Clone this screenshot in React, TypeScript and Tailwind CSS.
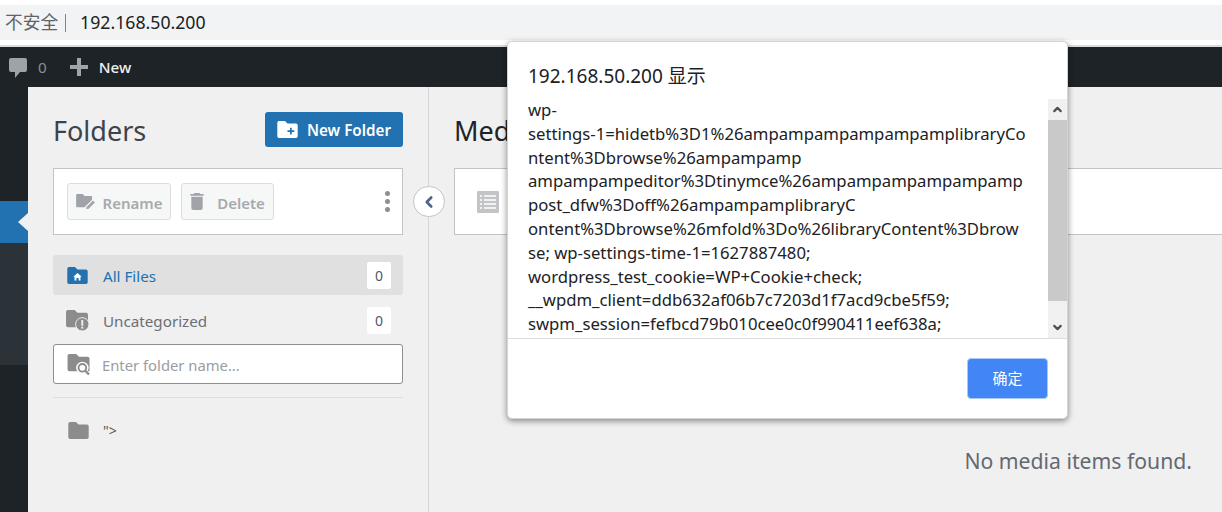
import React from "react";
import { ChevronLeft, ChevronUp, ChevronDown } from "lucide-react";

const sans = "font-['Noto_Sans','Noto_Sans_CJK_SC',sans-serif]";

const FolderIcon: React.FC<{ className?: string; children?: React.ReactNode }> = ({ className, children }) => (
  <svg viewBox="0 0 24 20" className={className} fill="currentColor">
    <path d="M2 0h7l3 3h10a2 2 0 0 1 2 2v13a2 2 0 0 1-2 2H2a2 2 0 0 1-2-2V2a2 2 0 0 1 2-2z" />
    {children}
  </svg>
);

const AdminBar: React.FC = () => (
  <div className="h-10 bg-[#1d2327] flex items-center pl-[9px] text-[15.2px]">
    <svg viewBox="0 0 18 20" className="w-[18px] h-5 mt-[1px] text-[#9ea3a8]" fill="currentColor">
      <path d="M2 0h14a2 2 0 0 1 2 2v10a2 2 0 0 1-2 2h-5l-5 6v-6H2a2 2 0 0 1-2-2V2a2 2 0 0 1 2-2z" />
    </svg>
    <span className="ml-[11px] text-[#8c8f94]">0</span>
    <svg viewBox="0 0 18 18" className="ml-[23px] w-[18px] h-[18px] text-[#a0a5aa]" fill="currentColor">
      <path d="M7 0h4v7h7v4h-7v7H7v-7H0V7h7z" />
    </svg>
    <span className="ml-[11px] text-[#f0f0f1] font-medium">New</span>
  </div>
);

const Sidebar: React.FC = () => (
  <div className="w-7 shrink-0 bg-[#1d2327] flex flex-col pt-[114px]">
    <div className="h-[42px] bg-[#2271b1] flex items-center justify-end">
      <div className="w-0 h-0 border-y-[9px] border-y-transparent border-r-[10px] border-r-[#f0f0f1]" />
    </div>
    <div className="h-[122px] bg-[#2c3338]" />
  </div>
);

const ToolButton: React.FC<{ label: string; icon: React.ReactNode; className: string }> = ({ label, icon, className }) => (
  <div className={`h-[37px] flex items-center justify-center gap-2 rounded-[3px] border border-[#dcdcde] bg-[#f6f7f7] text-[15px] font-semibold text-[#a7aaad] ${className}`}>
    {icon}
    <span className="mt-[3px]">{label}</span>
  </div>
);

const FolderRow: React.FC<{ label: string; active?: boolean; icon: React.ReactNode }> = ({ label, active, icon }) => (
  <div className={`h-10 flex items-center rounded-[3px] pl-[14px] pr-3 ${active ? "bg-[#e0e0e0] text-[#2271b1]" : "text-[#6b6f74]"}`}>
    <div className="w-[22px] flex">{icon}</div>
    <span className="ml-[14px] mt-[2px] text-[15.2px]">{label}</span>
    <span className="ml-auto w-6 h-[27px] bg-white rounded-[2px] flex items-center justify-center text-[14px] text-[#50575e]">0</span>
  </div>
);

const FolderPanel: React.FC = () => (
  <div className="w-[401px] shrink-0 border-r border-[#d5d5dc] pl-[25px] pr-[25px] pt-[25px]">
    <div className="flex items-center justify-between h-[35px]">
      <h2 className="text-[27px] mt-[3px] text-[#3c434a]">Folders</h2>
      <div className="w-[138px] h-[35px] rounded-[3px] bg-[#2271b1] text-white text-[15.2px] font-semibold flex items-center justify-center gap-[9px]">
        <FolderIcon className="w-[21px] h-[17px] text-white">
          <path d="M15 8h2v3h3v2h-3v3h-2v-3h-3v-2h3z" fill="#2271b1" />
        </FolderIcon>
        <span className="mt-[2px]">New Folder</span>
      </div>
    </div>
    <div className="mt-[21px] h-[67px] bg-white border border-[#c3c4c7] flex items-center pl-[13px] pr-[12px]">
      <ToolButton
        label="Rename"
        className="w-[104px]"
        icon={
          <svg viewBox="0 0 20 16" className="w-[19px] h-[15px] text-[#a0a3a8]" fill="currentColor">
            <path d="M1 0h6l2 2h7a1 1 0 0 1 1 1v3L9 14H1a1 1 0 0 1-1-1V1a1 1 0 0 1 1-1zM18 7l2 2-7 7h-2v-2z" />
          </svg>
        }
      />
      <ToolButton
        label="Delete"
        className="w-[93px] ml-[10px]"
        icon={
          <svg viewBox="0 0 14 18" className="w-[14px] h-[17px] text-[#a0a3a8] mr-[5px]" fill="currentColor">
            <path d="M4 0h6v1h4v2H0V1h4zM1 4h12v12a2 2 0 0 1-2 2H3a2 2 0 0 1-2-2z" />
          </svg>
        }
      />
      <div className="ml-auto flex flex-col gap-[2.500px]">
        <span className="w-[5.500px] h-[5.500px] rounded-full bg-[#8c8f94]" />
        <span className="w-[5.500px] h-[5.500px] rounded-full bg-[#8c8f94]" />
        <span className="w-[5.500px] h-[5.500px] rounded-full bg-[#8c8f94]" />
      </div>
    </div>
    <div className="mt-5 flex flex-col gap-[5px]">
      <FolderRow
        label="All Files"
        active
        icon={
          <FolderIcon className="w-[21px] h-[17px] text-[#2271b1]">
            <path d="M12 7l5 4.500h-1.500V16h-2.200v-3h-2.600v3H8.500v-4.500H7z" fill="#fff" />
          </FolderIcon>
        }
      />
      <FolderRow
        label="Uncategorized"
        icon={
          <svg viewBox="0 0 24 22" className="w-[23px] h-[21px] -ml-[1px] text-[#8c8c8c]" fill="currentColor">
            <path d="M2 0h7l3 3h9a2 2 0 0 1 2 2v13H2a2 2 0 0 1-2-2V2a2 2 0 0 1 2-2z" />
            <circle cx="17" cy="15" r="7" stroke="#f0f0f1" strokeWidth="1" />
            <rect x="16" y="10.500" width="2" height="6" fill="#f0f0f1" />
            <rect x="16" y="17.500" width="2" height="2" fill="#f0f0f1" />
          </svg>
        }
      />
    </div>
    <div className="mt-[4px] h-10 bg-white border border-[#8c8f94] rounded-[3px] flex items-center pl-[13px]">
      <svg viewBox="0 0 24 22" className="w-[24px] h-[21px] text-[#8c8c8c]" fill="currentColor">
        <path d="M2 0h7l3 3h9a2 2 0 0 1 2 2v13H2a2 2 0 0 1-2-2V2a2 2 0 0 1 2-2z" />
        <circle cx="15.500" cy="14.500" r="6.500" fill="#fff" />
        <circle cx="15.500" cy="14.500" r="4" fill="none" stroke="currentColor" strokeWidth="2" />
        <path d="M18.500 17.500l4 4" stroke="currentColor" strokeWidth="2.400" />
      </svg>
      <span className="ml-[11px] mt-[2px] text-[14.8px] text-[#9a9da1]">Enter folder name...</span>
    </div>
    <div className="mt-[13px] border-t border-[#dcdce4]" />
    <div className="mt-[22px] flex items-center pl-[15px] text-[#8c8c8c]">
      <FolderIcon className="w-[21px] h-[17px]" />
      <span className="ml-[14px] text-[14px] text-[#50575e]">"&gt;</span>
    </div>
  </div>
);

const MediaPanel: React.FC = () => (
  <div className="flex-1 min-w-0 pl-[25px] pt-[25px] flex flex-col">
    <h2 className="h-[35px] flex items-center pt-[3px] text-[27px] whitespace-nowrap text-[#1d2327]">Media Library</h2>
    <div className="mt-[21px] h-[67px] bg-white border border-[#c3c4c7] border-r-0 flex items-center pl-[22px]">
      <svg viewBox="0 0 22 22" className="w-[22px] h-[22px]">
        <rect width="22" height="22" rx="1" fill="#c3c4c7" />
        <path d="M3 5h2M7 5h12M3 9h2M7 9h12M3 13h2M7 13h12M3 17h2M7 17h12" stroke="#fff" strokeWidth="1.300" />
      </svg>
    </div>
    <p className="mt-[210px] pr-[30px] text-right text-[21.2px] text-[#646970]">No media items found.</p>
  </div>
);

const AlertDialog: React.FC = () => (
  <div className={`absolute left-[507px] top-[41px] w-[561px] h-[378px] bg-white rounded-[5px] border border-[#d4d4d4] shadow-[0_2px_6px_rgba(0,0,0,0.45)] flex flex-col ${sans}`}>
    <div className="pl-[20px] pt-[22px] h-[57px] text-[19px] leading-6 text-[#202124]">192.168.50.200 显示</div>
    <div className="h-[240px] flex border-b border-[#dadce0]">
      <div className="flex-1 min-w-0 pl-[20px] -mt-[1px] text-[16.7px] leading-[23.800px] text-[#202124] overflow-hidden whitespace-nowrap font-['Noto_Sans',sans-serif]">
        <div>wp-</div>
        <div>settings-1=hidetb%3D1%26ampampampampampamplibraryCo</div>
        <div>ntent%3Dbrowse%26ampampamp</div>
        <div>ampampampeditor%3Dtinymce%26ampampampampampamp</div>
        <div>post_dfw%3Doff%26ampampamplibraryC</div>
        <div>ontent%3Dbrowse%26mfold%3Do%26libraryContent%3Dbrow</div>
        <div>se; wp-settings-time-1=1627887480;</div>
        <div>wordpress_test_cookie=WP+Cookie+check;</div>
        <div>__wpdm_client=ddb632af06b7c7203d1f7acd9cbe5f59;</div>
        <div>swpm_session=fefbcd79b010cee0c0f990411eef638a;</div>
      </div>
      <div className="w-[19px] shrink-0 bg-[#f1f1f1] flex flex-col">
        <div className="h-[21px] flex items-center justify-center">
          <ChevronUp className="w-[13px] h-[13px] text-[#505050] stroke-[4]" />
        </div>
        <div className="h-[181px] bg-[#c9c9c9]" />
        <div className="mt-auto h-[21px] flex items-center justify-center">
          <ChevronDown className="w-[13px] h-[13px] text-[#505050] stroke-[4]" />
        </div>
      </div>
    </div>
    <div className="flex-1 flex items-center justify-end pr-[19px]">
      <div className="w-[81px] h-[41px] rounded-[4px] bg-[#4285f4] border border-[#a9c8f8] text-white text-[15px] flex items-center justify-center">确定</div>
    </div>
  </div>
);

export default function App() {
  return (
    <div className={`relative w-[1222px] h-[512px] overflow-hidden bg-[#f0f0f1] ${sans}`}>
      <div className="h-[5px] bg-white" />
      <div className="h-[35px] bg-[#f1f3f4] flex items-center pl-[5px] text-[17.7px]">
        <span className="text-[#5f6368]">不安全</span>
        <span className="ml-[7px] w-[1px] h-[18px] bg-[#80868b]" />
        <span className="ml-[14px] text-[#202124]">192.168.50.200</span>
      </div>
      <div className="h-[5px] bg-white" />
      <div className="h-[2px] bg-[#dcdcdc]" />
      <AdminBar />
      <div className="flex h-[425px]">
        <Sidebar />
        <FolderPanel />
        <MediaPanel />
      </div>
      <div className="absolute left-[413px] top-[186px] w-[32px] h-[31px] rounded-full bg-white border border-[#c3c4c7] flex items-center justify-center">
        <ChevronLeft className="w-[18px] h-[18px] text-[#50638a] stroke-[3.500]" />
      </div>
      <AlertDialog />
    </div>
  );
}
